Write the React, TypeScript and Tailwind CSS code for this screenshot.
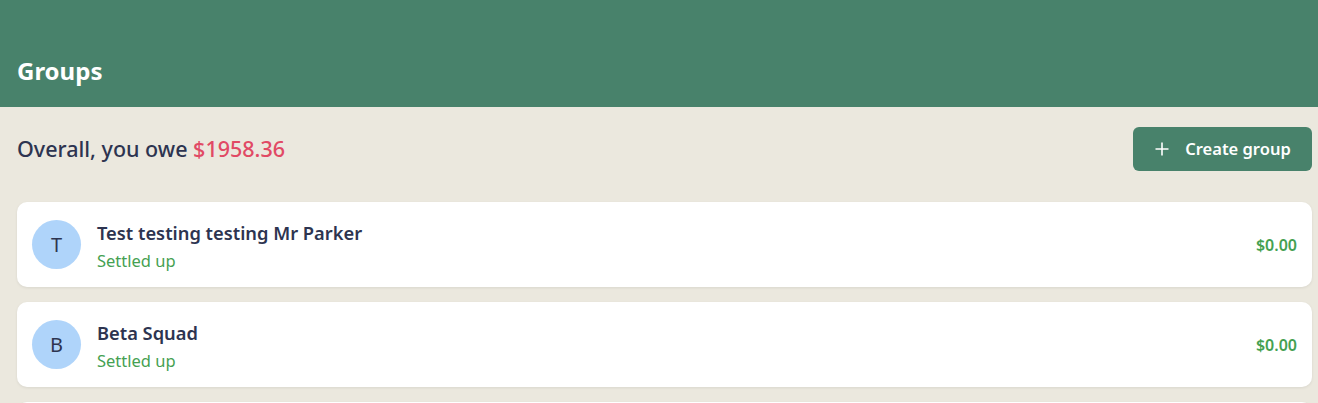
import React from "react";

const groups = [
  { initial: "T", name: "Test testing testing Mr Parker" },
  { initial: "B", name: "Beta Squad" },
  { initial: "C", name: "Cousins" },
];

export default function App() {
  return (
    <div
      className="min-h-screen bg-[#ebe8de]"
      style={{ fontFamily: '"Noto Sans", "Open Sans", sans-serif' }}
    >
      <header className="h-[107px] bg-[#48826b] px-[17px] flex items-end pb-[20px]">
        <h1 className="text-[24px] leading-[32px] font-bold text-white">Groups</h1>
      </header>
      <main className="px-[17px] pt-[20px]">
        <div className="flex items-center justify-between">
          <p className="text-[21.5px] leading-[30px] font-medium text-[#2d3450]">
            Overall, you owe <span className="text-[#e14a65]">$1958.36</span>
          </p>
          <button className="h-[44px] w-[179px] rounded-[6px] bg-[#48826b] text-white flex items-center justify-center gap-[15px] text-[16.5px] font-semibold -mr-[11px]">
            <svg width="16" height="16" viewBox="0 0 16 16" fill="none" stroke="white" strokeWidth="1.6">
              <path d="M8 1.5v13M1.5 8h13" />
            </svg>
            <span>Create group</span>
          </button>
        </div>
        <div className="mt-[31px] flex flex-col gap-[15px] mr-[-11px]">
          {groups.map((g) => (
            <div
              key={g.name}
              className="h-[85px] bg-white rounded-[10px] shadow-[0_1px_3px_rgba(0,0,0,0.08)] flex items-center pl-[15px] pr-[15px]"
            >
              <div className="w-[49px] h-[49px] rounded-full bg-[#afd4fa] flex items-center justify-center text-[20px] text-[#2d3450]">
                {g.initial}
              </div>
              <div className="ml-[16px] flex flex-col pt-[5px]">
                <span className="text-[18.3px] leading-[26px] font-semibold text-[#2d3450]">{g.name}</span>
                <span className="text-[16.5px] leading-[28px] text-[#45a152] mt-[1px]">Settled up</span>
              </div>
              <span className="ml-auto text-[16px] font-semibold text-[#45a152]">$0.00</span>
            </div>
          ))}
        </div>
      </main>
    </div>
  );
}
